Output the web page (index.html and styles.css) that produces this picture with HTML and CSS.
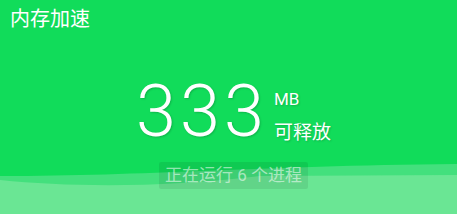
FILE: index.html
```html
<!DOCTYPE html>
<html>
<head>
    <title>内存加速</title>
    <meta name="viewport" content="width=device-width, initial-scale=1.0">
    <link rel="stylesheet" href="styles.css">
</head>
<body>
    <div class="screen">
        <div class="title">内存加速</div>

        <div class="stats">
            <div class="count">333</div>
            <div class="unit">
                <div class="unitSize">MB</div>
                <div class="unitText">可释放</div>
            </div>
        </div>

        <div class="running">正在运行 6 个进程</div>
    </div>
</body>
</html>
```

FILE: styles.css
```css
body {
    margin: 0;
    background-color: #11dc5a;
    font-family: Roboto, "Noto Sans CJK SC", sans-serif;
    overflow: hidden;
}

.screen {
    display: flex;
    flex-direction: column;
    width: 457px;
    height: 214px;
    background-color: #11dc5a;
    background-image: url("data:image/svg+xml,%3Csvg xmlns='http://www.w3.org/2000/svg' width='457' height='214'%3E%3Cpath d='M0 176 C150 176 250 166 457 164 L457 214 L0 214 Z' fill='%2343e07d'/%3E%3Cpath d='M0 180 C70 187 160 188 260 176 L457 175 L457 214 L0 214 Z' fill='%236ae694'/%3E%3C/svg%3E");
    background-repeat: no-repeat;
    color: white;
}

.title {
    padding: 7px 10px 0;
    font-size: 20px;
    line-height: 25px;
}

.stats {
    display: flex;
    justify-content: center;
    align-items: flex-start;
    margin-top: 44px;
    padding-left: 10px;
    text-shadow: 1px 1px 2px rgba(0, 0, 0, 0.18);
}

.count {
    font-size: 72px;
    font-weight: 300;
    line-height: 72px;
    letter-spacing: 4px;
}

.unit {
    display: flex;
    flex-direction: column;
    margin-left: 6px;
    padding-top: 12px;
}

.unitSize {
    font-size: 17px;
    line-height: 22px;
}

.unitText {
    margin-top: 12px;
    font-size: 19px;
    line-height: 22px;
}

.running {
    align-self: center;
    margin-top: 14px;
    margin-left: 10px;
    padding: 2px 6px;
    font-size: 17px;
    line-height: 23px;
    color: rgba(255, 255, 255, 0.55);
    background-color: rgba(0, 0, 0, 0.08);
    border-radius: 2px;
}
```
